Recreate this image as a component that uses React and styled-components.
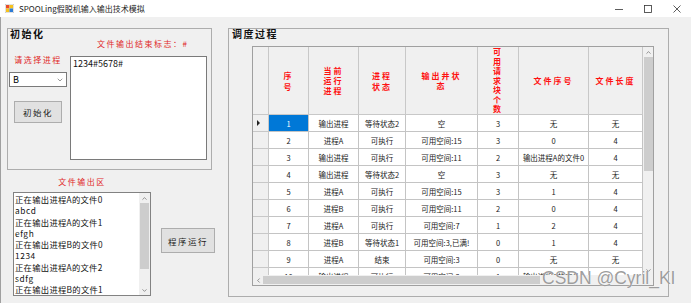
import React from "react";
import styled, { createGlobalStyle } from "styled-components";
import { ChevronDown, ChevronUp, ChevronLeft } from "lucide-react";

const GlobalStyle = createGlobalStyle`
  body {
    margin: 0;
    background: #f0f0f0;
    font-family: "Noto Sans CJK SC", "Noto Sans", sans-serif;
  }
`;

const Window = styled.div`
  position: relative;
  width: 691px;
  height: 303px;
  overflow: hidden;
  display: flex;
  flex-direction: column;
  background: #f0f0f0;
`;

/* Title bar */
const TitleBar = styled.div`
  height: 17px;
  flex: none;
  display: flex;
  align-items: center;
  background: #ffffff;
  padding-left: 5px;
`;

const TitleText = styled.span`
  margin-left: 5px;
  font-size: 8px;
  line-height: 10px;
  color: #1a1a1a;
`;

const Spacer = styled.div`
  flex: 1;
`;

const Control = styled.div`
  width: 29px;
  height: 17px;
  display: flex;
  align-items: center;
  justify-content: center;
`;

/* Body */
const Body = styled.div`
  flex: 1;
  display: flex;
  padding: 11px 0 0 6px;
  border-left: 1px solid #a0a0a0;
`;

const LeftCol = styled.div`
  width: 214px;
  flex: none;
  display: flex;
  flex-direction: column;
`;

const Group = styled.div`
  box-sizing: border-box;
  width: ${({ $w }) => $w}px;
  height: ${({ $h }) => $h}px;
  border: 1px solid #adadad;
  display: flex;
  flex-direction: column;
  flex: none;
`;

const GroupTitle = styled.div`
  height: 10px;
  line-height: 10px;
  margin-left: ${({ $ml }) => $ml || 2}px;
  font-size: 10px;
  font-weight: bold;
  letter-spacing: 1.5px;
  color: #111;
`;

const InitRow = styled.div`
  display: flex;
`;

const LeftStack = styled.div`
  width: 58px;
  margin-left: 1px;
  display: flex;
  flex-direction: column;
  align-items: center;
`;

const RightStack = styled.div`
  width: 137px;
  margin-left: 3px;
  display: flex;
  flex-direction: column;
`;

const RedLabel = styled.div`
  height: 10px;
  line-height: 10px;
  font-size: 8px;
  letter-spacing: 1.5px;
  color: #e02828;
  white-space: nowrap;
  margin-top: ${({ $mt }) => $mt || 0}px;
  padding-left: ${({ $pl }) => $pl || 0}px;
  text-align: ${({ $align }) => $align || "left"};
`;

const Combo = styled.div`
  box-sizing: border-box;
  width: 58px;
  height: 15px;
  margin-top: 7px;
  background: #fff;
  border: 1px solid #7a7a7a;
  display: flex;
  align-items: center;
  justify-content: space-between;
  padding: 0 2px 0 3px;
  font-size: 9px;
  color: #000;
`;

const WinButton = styled.div`
  box-sizing: border-box;
  width: ${({ $w }) => $w}px;
  height: ${({ $h }) => $h}px;
  margin-top: ${({ $mt }) => $mt}px;
  margin-left: ${({ $ml }) => $ml || 0}px;
  flex: none;
  background: #e1e1e1;
  border: 1px solid #adadad;
  display: flex;
  align-items: center;
  justify-content: center;
  font-size: 8.5px;
  letter-spacing: 1.5px;
  color: #222;
`;

const TextBox = styled.div`
  box-sizing: border-box;
  height: 104px;
  margin-top: 7px;
  background: #fff;
  border: 1px solid #7a7a7a;
  padding: 1px 2px;
  font-size: 9px;
  line-height: 11px;
  color: #111;
`;

const OutputArea = styled.div`
  display: flex;
  margin-left: 6px;
`;

const ListCol = styled.div`
  width: 138px;
  display: flex;
  flex-direction: column;
`;

const ListBox = styled.div`
  box-sizing: border-box;
  height: 104px;
  margin-top: 5px;
  background: #fff;
  border: 1px solid #828282;
  display: flex;
  overflow: hidden;
`;

const ListItems = styled.div`
  flex: 1;
  padding: 1px 0 0 1px;
  overflow: hidden;
`;

const ListItem = styled.div`
  height: 11.3px;
  line-height: 11.3px;
  font-size: 8.3px;
  letter-spacing: ${({ $cjk }) => ($cjk ? "0.3px" : "0.6px")};
  color: #111;
  white-space: nowrap;
`;

const VScroll = styled.div`
  width: ${({ $w }) => $w}px;
  flex: none;
  background: #f0f0f0;
  display: flex;
  flex-direction: column;
  align-items: center;
`;

const ArrowBox = styled.div`
  width: 100%;
  height: 10px;
  flex: none;
  display: flex;
  align-items: center;
  justify-content: center;
`;

const VThumb = styled.div`
  width: ${({ $w }) => $w}px;
  height: ${({ $h }) => $h}px;
  background: #cdcdcd;
  flex: none;
`;

/* Grid */
const GridFrame = styled.div`
  box-sizing: border-box;
  width: 402px;
  height: 240px;
  margin-left: 23px;
  margin-top: 7px;
  border: 1px solid #a0a0a0;
  background: #f0f0f0;
  display: grid;
  grid-template-columns: 390px 10px;
  grid-template-rows: 228px 10px;
`;

const Viewport = styled.div`
  overflow: hidden;
  background: #ababab;
`;

const cols = "16px 40px 50px 47px 72px 41px 70px 54px";

const GridRow = styled.div`
  display: grid;
  grid-template-columns: ${cols};
  height: ${({ $h }) => $h}px;
`;

const Cell = styled.div`
  box-sizing: border-box;
  border-right: 1px solid #c4c4c4;
  border-bottom: 1px solid #c4c4c4;
  display: flex;
  align-items: center;
  justify-content: center;
  overflow: hidden;
  white-space: nowrap;
  font-size: 7.5px;
  background: ${({ $sel }) => ($sel ? "#0078d7" : "#ffffff")};
  color: ${({ $sel }) => ($sel ? "#ffffff" : "#1a1a1a")};
`;

const HeadCell = styled.div`
  box-sizing: border-box;
  border-right: 1px solid #c8c8c8;
  border-bottom: 1px solid #c8c8c8;
  background: #f0f0f0;
  display: flex;
  flex-direction: column;
  align-items: center;
  justify-content: center;
  color: #ff1010;
  font-size: 8px;
  font-weight: bold;
  line-height: ${({ $lh }) => $lh || 11}px;
  letter-spacing: 2px;
  white-space: nowrap;
`;

const RowHead = styled.div`
  box-sizing: border-box;
  border-right: 1px solid #c8c8c8;
  border-bottom: 1px solid #c8c8c8;
  background: #f0f0f0;
  display: flex;
  align-items: center;
  padding-left: 4px;
`;

const Pointer = styled.div`
  width: 0;
  height: 0;
  border-top: 3px solid transparent;
  border-bottom: 3px solid transparent;
  border-left: 3px solid #222;
`;

const HScroll = styled.div`
  display: flex;
  align-items: center;
  background: #f0f0f0;
`;

const HThumb = styled.div`
  width: ${({ $w }) => $w}px;
  height: 8px;
  background: #cdcdcd;
`;

const Corner = styled.div`
  background: #f0f0f0;
`;

const Watermark = styled.div`
  position: absolute;
  left: 542px;
  top: 268px;
  font-family: "Liberation Sans", Arial, sans-serif;
  font-size: 17.5px;
  line-height: 20px;
  color: rgba(140, 140, 140, 0.85);
  text-shadow: 0 0 1px #fff;
  white-space: nowrap;
`;

const AppIcon = () => (
  <svg width="9" height="9" viewBox="0 0 9 9">
    <rect x="0" y="0" width="9" height="9" fill="#fff" stroke="#9a9a9a" strokeWidth="0.6" />
    <rect x="1" y="1" width="3.5" height="3.5" fill="#e84a2a" />
    <rect x="4.5" y="1" width="3.5" height="3.5" fill="#f6c21c" />
    <rect x="1" y="4.5" width="3.5" height="3.5" fill="#f6c21c" />
    <rect x="4.5" y="4.5" width="3.5" height="3.5" fill="#2d7bd6" />
  </svg>
);

const headers = [
  { lines: ["序", "号"] },
  { lines: ["当前", "运行", "进程"], lh: 10 },
  { lines: ["进程", "状态"] },
  { lines: ["输出井状", "态"], lh: 10 },
  { lines: ["可", "用", "请", "求", "块", "个", "数"], lh: 9.5 },
  { lines: ["文件序号"] },
  { lines: ["文件长度"] },
];

const rows = [
  ["1", "输出进程", "等待状态2", "空", "3", "无", "无"],
  ["2", "进程A", "可执行", "可用空间:15", "3", "0", "4"],
  ["3", "输出进程", "可执行", "可用空间:11", "2", "输出进程A的文件0", "4"],
  ["4", "输出进程", "等待状态2", "空", "3", "无", "无"],
  ["5", "进程A", "可执行", "可用空间:15", "3", "1", "4"],
  ["6", "进程B", "可执行", "可用空间:11", "2", "0", "4"],
  ["7", "进程A", "可执行", "可用空间:7", "1", "2", "4"],
  ["8", "进程B", "等待状态1", "可用空间:3,已满!", "0", "1", "4"],
  ["9", "进程A", "结束", "可用空间:3", "0", "无", "无"],
  ["10", "输出进程", "可执行", "可用空间:3", "1", "输出进程A的文件1", "4"],
];

const outputLines = [
  "正在输出进程A的文件0",
  "abcd",
  "正在输出进程A的文件1",
  "efgh",
  "正在输出进程B的文件0",
  "1234",
  "正在输出进程A的文件2",
  "sdfg",
  "正在输出进程B的文件1",
];

const arrow = { size: 7, color: "#606060", strokeWidth: 2.2 };

const App = () => {
  return (
    <>
      <GlobalStyle />
      <Window>
        <TitleBar>
          <AppIcon />
          <TitleText>SPOOLing假脱机输入输出技术模拟</TitleText>
          <Spacer />
          <Control>
            <svg width="8" height="8" viewBox="0 0 8 8">
              <line x1="0" y1="4.5" x2="8" y2="4.5" stroke="#333" strokeWidth="0.8" />
            </svg>
          </Control>
          <Control>
            <svg width="8" height="8" viewBox="0 0 8 8">
              <rect x="0.5" y="0.5" width="7" height="7" fill="none" stroke="#333" strokeWidth="0.8" />
            </svg>
          </Control>
          <Control>
            <svg width="8" height="8" viewBox="0 0 8 8">
              <path d="M0.5 0.5 L7.5 7.5 M7.5 0.5 L0.5 7.5" stroke="#333" strokeWidth="0.8" />
            </svg>
          </Control>
        </TitleBar>

        <Body>
          <LeftCol>
            <Group $w={205} $h={142}>
              <GroupTitle>初始化</GroupTitle>
              <InitRow>
                <LeftStack>
                  <RedLabel $mt={16}>请选择进程</RedLabel>
                  <Combo>
                    <span>B</span>
                    <ChevronDown size={8} color="#555" strokeWidth={1.8} />
                  </Combo>
                  <WinButton $w={48} $h={22} $mt={14}>
                    初始化
                  </WinButton>
                </LeftStack>
                <RightStack>
                  <RedLabel $pl={27}>文件输出结束标志：#</RedLabel>
                  <TextBox>1234#5678#</TextBox>
                </RightStack>
              </InitRow>
            </Group>

            <OutputArea>
              <ListCol>
                <RedLabel $mt={7} $align="center">
                  文件输出区
                </RedLabel>
                <ListBox>
                  <ListItems>
                    {outputLines.map((line, i) => (
                      <ListItem key={i} $cjk={/[\u4e00-\u9fa5]/.test(line)}>
                        {line}
                      </ListItem>
                    ))}
                  </ListItems>
                  <VScroll $w={11}>
                    <ArrowBox>
                      <ChevronUp {...arrow} />
                    </ArrowBox>
                    <VThumb $w={9} $h={66} />
                    <Spacer />
                    <ArrowBox>
                      <ChevronDown {...arrow} />
                    </ArrowBox>
                  </VScroll>
                </ListBox>
              </ListCol>
              <WinButton $w={54} $h={25} $mt={58} $ml={10}>
                程序运行
              </WinButton>
            </OutputArea>
          </LeftCol>

          <Group $w={441} $h={269} style={{ marginLeft: 7 }}>
            <GroupTitle $ml={3}>调度过程</GroupTitle>
            <GridFrame>
              <Viewport>
                <GridRow $h={68}>
                  <HeadCell />
                  {headers.map((h, i) => (
                    <HeadCell key={i} $lh={h.lh}>
                      {h.lines.map((l, j) => (
                        <span key={j}>{l}</span>
                      ))}
                    </HeadCell>
                  ))}
                </GridRow>
                {rows.map((r, i) => (
                  <GridRow key={i} $h={17}>
                    <RowHead>{i === 0 && <Pointer />}</RowHead>
                    {r.map((v, j) => (
                      <Cell key={j} $sel={i === 0 && j === 0}>
                        {v}
                      </Cell>
                    ))}
                  </GridRow>
                ))}
              </Viewport>
              <VScroll $w={10}>
                <ArrowBox>
                  <ChevronUp {...arrow} />
                </ArrowBox>
                <VThumb $w={9} $h={114} />
                <Spacer />
                <ArrowBox>
                  <ChevronDown {...arrow} />
                </ArrowBox>
              </VScroll>
              <HScroll>
                <ArrowBox style={{ width: 10 }}>
                  <ChevronLeft {...arrow} />
                </ArrowBox>
                <HThumb $w={277} />
              </HScroll>
              <Corner />
            </GridFrame>
          </Group>
        </Body>

        <Watermark>CSDN @Cyril_KI</Watermark>
      </Window>
    </>
  );
};

export default App;
